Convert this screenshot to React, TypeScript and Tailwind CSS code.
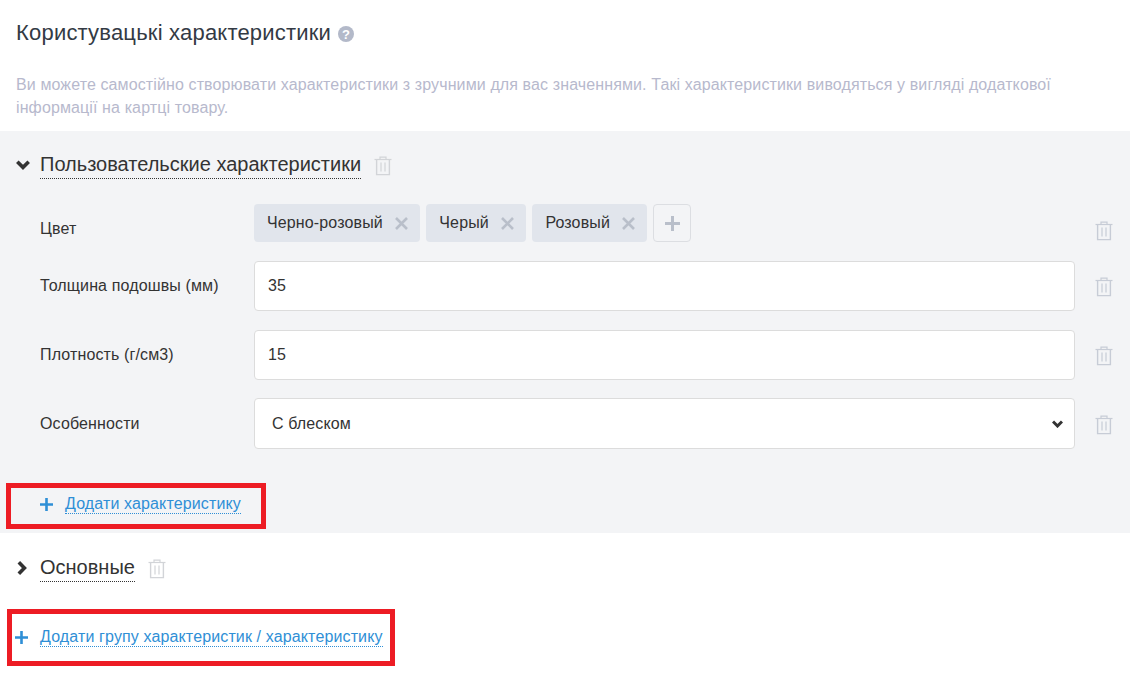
import React from "react";

const Trash = ({ className = "" }: { className?: string }) => (
  <svg width="18" height="20" viewBox="0 0 18 20" fill="none" className={className} stroke="currentColor" strokeWidth="1.2">
    <path d="M0.5 3.5H17.5" />
    <path d="M6 3.5V1.2H12V3.5" />
    <path d="M2.6 3.5V18.6H15.4V3.5" strokeWidth="1.4" />
    <path d="M7 6.5V15.5M11 6.5V15.5" />
  </svg>
);

const Chevron = ({ right = false }: { right?: boolean }) => (
  <svg width="14" height="10" viewBox="0 0 14 10" fill="none" stroke="#333333" strokeWidth="3.6" className={right ? "-rotate-90" : ""}>
    <path d="M1.3 1.8L7 7.4L12.7 1.8" />
  </svg>
);

const Plus = () => (
  <svg width="13" height="13" viewBox="0 0 13 13" stroke="#2f8fd6" strokeWidth="2.6">
    <path d="M6.5 0V13M0 6.5H13" />
  </svg>
);

const X = () => (
  <svg width="13" height="13" viewBox="0 0 13 13" stroke="#b9bfca" strokeWidth="2.6" className="ml-[12px]">
    <path d="M1 1L12 12M12 1L1 12" />
  </svg>
);

const Tag = ({ text }: { text: string }) => (
  <div className="flex h-[38px] items-center rounded-[4px] bg-[#e1e5ec] pl-[13px] pr-[12px] text-[#333]">
    {text}
    <X />
  </div>
);

const Row = ({ label, h, children, mt, labelClass = "", trashClass = "mt-[2px]" }: { label: string; h: string; children: React.ReactNode; mt: string; labelClass?: string; trashClass?: string }) => (
  <div className={`flex items-center pl-[40px] ${h} ${mt}`}>
    <div className={`w-[214px] text-[#333] ${labelClass}`}>{label}</div>
    <div className="w-[821px]">{children}</div>
    <Trash className={`ml-[20px] text-[#c7ccd6] ${trashClass}`} />
  </div>
);

const Input = ({ value }: { value: string }) => (
  <div className="flex h-[50px] items-center rounded-[4px] border border-[#dcdcdc] bg-white pl-[13px] text-[#333]">{value}</div>
);

export default function App() {
  return (
    <div className="relative h-[676px] w-[1130px] overflow-hidden bg-white text-[16px] tracking-[0.13px] font-['Liberation_Sans',Arial,sans-serif]">
      <div className="flex h-[66px] items-center pl-[16px]">
        <h1 className="text-[22px] leading-[30px] tracking-[0.2px] text-[#333a44]">Користувацькі характеристики</h1>
        <svg width="16" height="16" viewBox="0 0 16 16" className="ml-[7px] mt-[2px]">
          <circle cx="8" cy="8" r="8" fill="#b3b9c9" />
          <text x="8" y="12.6" textAnchor="middle" fontSize="13" fontWeight="700" fill="#fff" fontFamily="Liberation Sans">?</text>
        </svg>
      </div>
      <p className="h-[65px] pl-[16px] pt-[7px] pr-[60px] text-[16px] leading-[23px] tracking-[0.115px] text-[#b7b9cd]">
        Ви можете самостійно створювати характеристики з зручними для вас значеннями. Такі характеристики виводяться у вигляді додаткової інформації на картці товару.
      </p>
      <section className="h-[402px] bg-[#f3f4f6]">
        <div className="flex h-[73px] items-center pb-[6px]">
          <div className="ml-[16px] w-[24px]"><Chevron /></div>
          <span className="border-b border-dotted border-[#333] text-[20px] leading-[27px] tracking-normal text-[#333]">Пользовательские характеристики</span>
          <Trash className="ml-[13px] mt-[3px] text-[#d2d4d8]" />
        </div>
        <Row label="Цвет" h="h-[38px]" mt="" labelClass="mt-[12px]" trashClass="mt-[16px]">
          <div className="flex gap-[6.5px]">
            <Tag text="Черно-розовый" />
            <Tag text="Черый" />
            <Tag text="Розовый" />
            <div className="flex h-[38px] w-[38px] items-center justify-center rounded-[4px] border border-[#dcdee2]">
              <svg width="15" height="15" viewBox="0 0 15 15" stroke="#b9bfca" strokeWidth="3"><path d="M7.5 0V15M0 7.5H15" /></svg>
            </div>
          </div>
        </Row>
        <Row label="Толщина подошвы (мм)" h="h-[50px]" mt="mt-[19px]"><Input value="35" /></Row>
        <Row label="Плотность (г/см3)" h="h-[50px]" mt="mt-[19px]"><Input value="15" /></Row>
        <Row label="Особенности" h="h-[51px]" mt="mt-[18px]">
          <div className="flex h-[51px] items-center justify-between rounded-[4px] border border-[#dcdcdc] bg-white pl-[17px] pr-[11px] text-[#333]">
            С блеском
            <svg width="11" height="8" viewBox="0 0 11 8" fill="none" stroke="#333333" strokeWidth="3"><path d="M1 1.5L5.5 6L10 1.5" /></svg>
          </div>
        </Row>
        <div className="mt-[45px] flex items-center pl-[40px]">
          <Plus />
          <span className="ml-[12px] border-b border-dotted border-[#2f8fd6] leading-[19px] text-[#2f8fd6]">Додати характеристику</span>
        </div>
      </section>
      <div className="flex h-[69px] items-center">
        <div className="ml-[15px] w-[25px]"><Chevron right /></div>
        <span className="border-b border-dotted border-[#333] text-[20px] leading-[27px] tracking-normal text-[#333]">Основные</span>
        <Trash className="ml-[13px] mt-[3px] text-[#d2d4d8]" />
      </div>
      <div className="mt-[25px] flex items-center pl-[15px]">
        <Plus />
        <span className="ml-[12px] border-b border-dotted border-[#2f8fd6] leading-[19px] text-[#2f8fd6]">Додати групу характеристик / характеристику</span>
      </div>
      <div className="absolute left-[6px] top-[483px] h-[46px] w-[260px] border-[5px] border-[#ed1c24]" />
      <div className="absolute left-[7px] top-[609px] h-[57px] w-[388px] border-[5px] border-[#ed1c24]" />
    </div>
  );
}
